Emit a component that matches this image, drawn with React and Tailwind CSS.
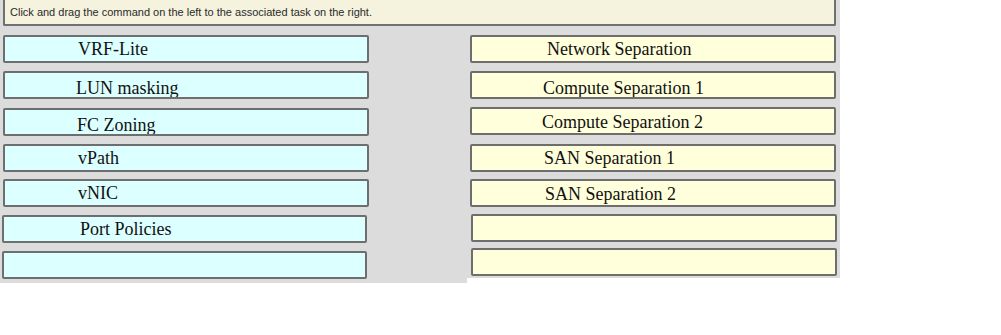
const commands = [
  { label: "VRF-Lite", mt: "mt-0", shift: "pt-0", pl: "pl-[73px]", x: "ml-[3px] w-[366px]" },
  { label: "LUN masking", mt: "mt-[8px]", shift: "pt-[3px]", pl: "pl-[71px]", x: "ml-[3px] w-[366px]" },
  { label: "FC Zoning", mt: "mt-[9px]", shift: "pt-[3px]", pl: "pl-[72px]", x: "ml-[3px] w-[366px]" },
  { label: "vPath", mt: "mt-[8px]", shift: "pt-0", pl: "pl-[73px]", x: "ml-[3px] w-[366px]" },
  { label: "vNIC", mt: "mt-[7px]", shift: "pt-0", pl: "pl-[73px]", x: "ml-[3px] w-[366px]" },
  { label: "Port Policies", mt: "mt-[8px]", shift: "pt-0", pl: "pl-[76px]", x: "ml-[2px] w-[365px]" },
  { label: "", mt: "mt-[8px]", shift: "pt-0", pl: "pl-[73px]", x: "ml-[2px] w-[365px]" },
];

const tasks = [
  { label: "Network Separation", mt: "mt-0", shift: "pt-0", pl: "pl-[75px]", x: "ml-[3px]" },
  { label: "Compute Separation 1", mt: "mt-[8px]", shift: "pt-[3px]", pl: "pl-[71px]", x: "ml-[3px]" },
  { label: "Compute Separation 2", mt: "mt-[8px]", shift: "pt-[1px]", pl: "pl-[70px]", x: "ml-[3px]" },
  { label: "SAN Separation 1", mt: "mt-[9px]", shift: "pt-0", pl: "pl-[72px]", x: "ml-[3px]" },
  { label: "SAN Separation 2", mt: "mt-[7px]", shift: "pt-[1px]", pl: "pl-[73px]", x: "ml-[3px]" },
  { label: "", mt: "mt-[7px]", shift: "pt-0", pl: "pl-[72px]", x: "ml-[4px]" },
  { label: "", mt: "mt-[6px]", shift: "pt-0", pl: "pl-[72px]", x: "ml-[4px]" },
];

function Slot({ item, bg }) {
  return (
    <div
      className={`${item.mt} ${item.x} h-[28px] overflow-hidden rounded-[2px] border-2 border-[#6e6e6e] ${bg}`}
    >
      <div
        className={`${item.shift} ${item.pl} h-[24px] whitespace-nowrap text-[18px] leading-[24px] text-[#111]`}
        style={{ fontFamily: '"Liberation Serif", "Times New Roman", serif' }}
      >
        {item.label}
      </div>
    </div>
  );
}

export default function App() {
  return (
    <div className="w-[1001px] h-[335px] bg-white">
      <div className="w-[840px] h-[35px] bg-[#dcdcdc]">
        <div className="ml-[3px] w-[833px] h-[26px] rounded-b-[2px] border-x-2 border-b-2 border-[#707070] bg-[#f5f3de] pl-[5px]">
          <p
            className="text-[11px] leading-[24px] text-[#2a2a2a]"
            style={{ fontFamily: '"Liberation Sans", Arial, sans-serif' }}
          >
            Click and drag the command on the left to the associated task on the right.
          </p>
        </div>
      </div>
      <div className="flex items-start">
        <div className="w-[467px] bg-[#dcdcdc] pb-[4px]">
          {commands.map((c, i) => (
            <Slot key={i} item={c} bg="bg-[#dcffff]" />
          ))}
        </div>
        <div className="w-[373px] bg-[#dcdcdc] pb-[2px]">
          {tasks.map((t, i) => (
            <Slot key={i} item={{ ...t, x: `${t.x} w-[366px]` }} bg="bg-[#ffffdc]" />
          ))}
        </div>
      </div>
    </div>
  );
}
